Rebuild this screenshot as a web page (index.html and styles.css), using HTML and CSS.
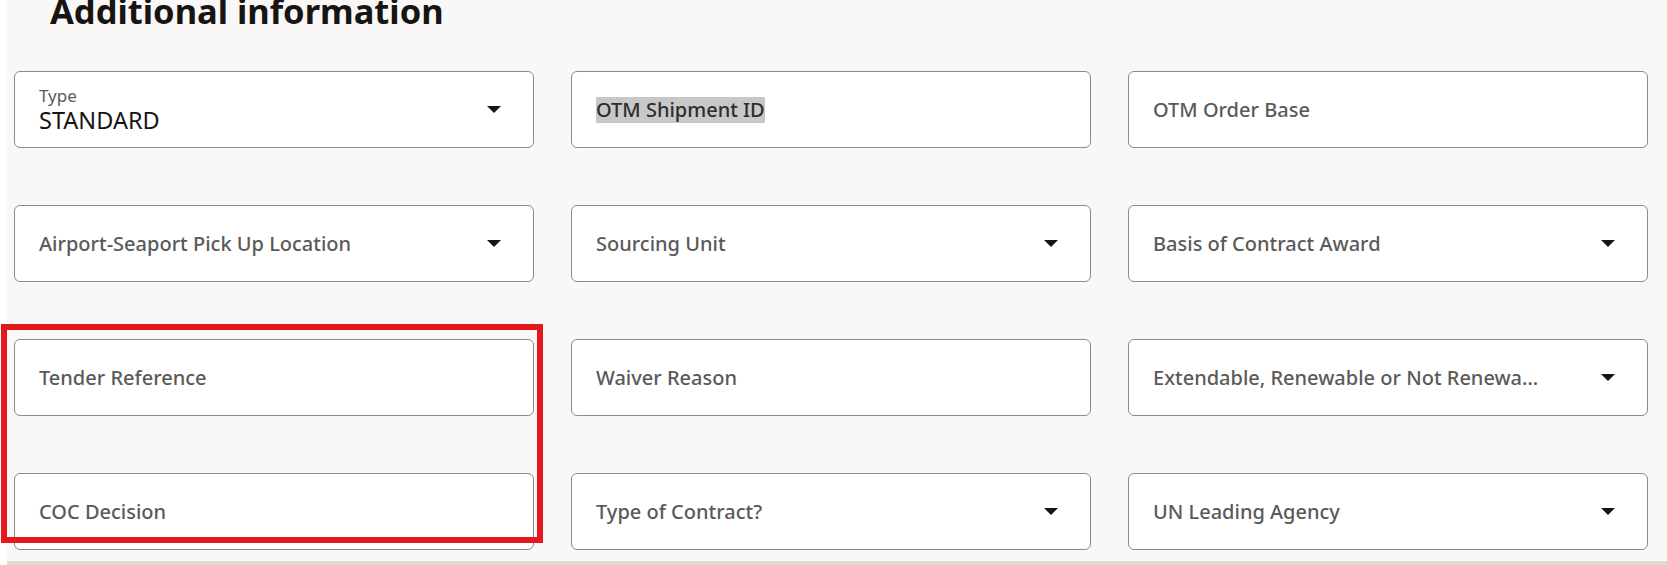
FILE: index.html
```html
<!DOCTYPE html>
<html>
<head>
<meta charset="utf-8">
<link rel="stylesheet" href="styles.css">
</head>
<body>
<div class="page">
  <h2 class="title">Additional information</h2>
  <div class="grid">
    <div class="field select has-value">
      <div class="text">
        <span class="label">Type</span>
        <span class="value">STANDARD</span>
      </div>
      <svg class="arrow" width="14" height="7" viewBox="0 0 14 7"><path d="M0 0H14L7 7Z"/></svg>
    </div>
    <div class="field">
      <div class="text"><span class="placeholder selected">OTM Shipment ID</span></div>
    </div>
    <div class="field">
      <div class="text"><span class="placeholder">OTM Order Base</span></div>
    </div>

    <div class="field select">
      <div class="text"><span class="placeholder">Airport-Seaport Pick Up Location</span></div>
      <svg class="arrow" width="14" height="7" viewBox="0 0 14 7"><path d="M0 0H14L7 7Z"/></svg>
    </div>
    <div class="field select">
      <div class="text"><span class="placeholder">Sourcing Unit</span></div>
      <svg class="arrow" width="14" height="7" viewBox="0 0 14 7"><path d="M0 0H14L7 7Z"/></svg>
    </div>
    <div class="field select">
      <div class="text"><span class="placeholder">Basis of Contract Award</span></div>
      <svg class="arrow" width="14" height="7" viewBox="0 0 14 7"><path d="M0 0H14L7 7Z"/></svg>
    </div>

    <div class="field">
      <div class="text"><span class="placeholder">Tender Reference</span></div>
    </div>
    <div class="field">
      <div class="text"><span class="placeholder">Waiver Reason</span></div>
    </div>
    <div class="field select">
      <div class="text"><span class="placeholder ellipsis">Extendable, Renewable or Not Renewable</span></div>
      <svg class="arrow" width="14" height="7" viewBox="0 0 14 7"><path d="M0 0H14L7 7Z"/></svg>
    </div>

    <div class="field">
      <div class="text"><span class="placeholder">COC Decision</span></div>
    </div>
    <div class="field select">
      <div class="text"><span class="placeholder">Type of Contract?</span></div>
      <svg class="arrow" width="14" height="7" viewBox="0 0 14 7"><path d="M0 0H14L7 7Z"/></svg>
    </div>
    <div class="field select">
      <div class="text"><span class="placeholder">UN Leading Agency</span></div>
      <svg class="arrow" width="14" height="7" viewBox="0 0 14 7"><path d="M0 0H14L7 7Z"/></svg>
    </div>
  </div>
</div>
<div class="highlight"></div>
</body>
</html>
```

FILE: styles.css
```css
html, body {
  margin: 0;
  padding: 0;
  background: #ffffff;
}

body {
  position: relative;
  height: 565px;
  overflow: hidden;
  font-family: "Noto Sans", "Liberation Sans", sans-serif;
  color: #161513;
}

.page {
  display: flow-root;
  margin-left: 7px;
  height: 561px;
  background: #f9f8f6;
  border-bottom: 4px solid #dedbd5;
}

.title {
  margin: -10px 0 0 43px;
  font-size: 34.5px;
  line-height: 42px;
  font-weight: 700;
  color: #161513;
  white-space: nowrap;
}

.grid {
  display: grid;
  grid-template-columns: repeat(3, 520px);
  grid-auto-rows: 77px;
  column-gap: 37px;
  row-gap: 57px;
  padding-left: 7px;
  margin-top: 39px;
}

.field {
  box-sizing: border-box;
  display: flex;
  align-items: center;
  background: #ffffff;
  border: 1px solid #8b8b8a;
  border-radius: 6px;
  padding: 0 32px 0 24px;
}

.text {
  flex: 1;
  min-width: 0;
  display: flex;
  flex-direction: column;
}

.placeholder {
  font-size: 20px;
  line-height: 26px;
  font-weight: 500;
  color: #5b5a59;
  white-space: nowrap;
}

.placeholder.selected {
  align-self: flex-start;
  color: #2e2d2b;
  background: #c8c8c8;
}

.ellipsis {
  display: block;
  overflow: hidden;
  text-overflow: ellipsis;
  padding-right: 58px;
}

.has-value .text {
  gap: 2px;
}

.label {
  font-size: 17px;
  line-height: 19px;
  color: #5b5a59;
}

.value {
  font-size: 23.5px;
  line-height: 27px;
  color: #161513;
}

.arrow {
  flex: none;
  fill: #161513;
}

.highlight {
  position: absolute;
  left: 1px;
  top: 324px;
  width: 530px;
  height: 207px;
  border: 6px solid #e3191f;
}
```
